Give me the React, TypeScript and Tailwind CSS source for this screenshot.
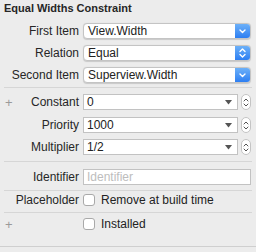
import React from "react";

const font = { fontFamily: '"Liberation Sans", Arial, sans-serif' };

const Chevron = ({ double }: { double?: boolean }) => (
  <svg width="9" height="12" viewBox="0 0 9 12" fill="none" stroke="white" strokeWidth="1.4" strokeLinecap="round" strokeLinejoin="round">
    {double ? (
      <>
        <path d="M2 4.5 L4.5 2 L7 4.5" />
        <path d="M2 7.5 L4.5 10 L7 7.5" />
      </>
    ) : (
      <path d="M2 5 L4.5 7.5 L7 5" />
    )}
  </svg>
);

const Popup = ({ value, double }: { value: string; double?: boolean }) => (
  <div className="flex h-[16px] items-stretch overflow-hidden rounded-[4px] border border-[#c4c4c4] bg-white shadow-[0_0.5px_1px_rgba(0,0,0,0.15)]">
    <div className="flex flex-1 items-center pl-[4px] text-[12px] leading-none text-[#222]">{value}</div>
    <div className="flex w-[15px] items-center justify-center bg-gradient-to-b from-[#6cb0f8] to-[#2c7ef2]">
      <Chevron double={double} />
    </div>
  </div>
);

const Stepper = () => (
  <div className="flex h-[16px] w-[10px] flex-col items-center justify-center rounded-[5px] border border-[#c4c4c4] bg-white">
    <svg width="6" height="11" viewBox="0 0 6 11" fill="none" stroke="#555" strokeWidth="1" strokeLinecap="round" strokeLinejoin="round">
      <path d="M1 4 L3 2 L5 4" />
      <path d="M1 7 L3 9 L5 7" />
    </svg>
  </div>
);

const Combo = ({ value }: { value: string }) => (
  <div className="flex items-center gap-[3px]">
    <div className="flex h-[16px] flex-1 items-center justify-between border border-[#c2c2c2] bg-white pl-[3px] pr-[5px]">
      <span className="text-[12px] leading-none text-[#222]">{value}</span>
      <svg width="7" height="5" viewBox="0 0 7 5">
        <path d="M0 0 H7 L3.5 4.5 Z" fill="#555" />
      </svg>
    </div>
    <Stepper />
  </div>
);

const Checkbox = () => (
  <div className="h-[12px] w-[12px] rounded-[3px] border border-[#a9a9a9] bg-white" />
);

const Row = ({
  label,
  plus,
  children,
  className = "",
}: {
  label?: string;
  plus?: boolean;
  children: React.ReactNode;
  className?: string;
}) => (
  <div className={"relative flex items-center " + className}>
    {plus && <span className="absolute left-[5px] text-[13px] font-light leading-none text-[#9a9a9a]">+</span>}
    <div className="w-[79px] shrink-0 text-right text-[12px] leading-none text-[#262626]">{label}</div>
    <div className="ml-[4px] mr-[5px] flex-1">{children}</div>
  </div>
);

const Sep = ({ className = "" }: { className?: string }) => (
  <div className={"mx-[4px] h-px bg-[#d6d6d6] " + className} />
);

export default function App() {
  return (
    <div className="h-[252px] w-[256px] overflow-hidden bg-[#ececec]" style={font}>
      <div className="h-[15px] px-[4px] pt-[2px] text-[11px] font-bold leading-[13px] text-[#262626]">
        Equal Widths Constraint
      </div>

      <Row label="First Item" className="mt-[8px] h-[16px]">
        <Popup value="View.Width" />
      </Row>
      <Row label="Relation" className="mt-[6px] h-[16px]">
        <Popup value="Equal" double />
      </Row>
      <Row label="Second Item" className="mt-[6px] h-[16px]">
        <Popup value="Superview.Width" />
      </Row>

      <Sep className="mt-[4px]" />

      <Row label="Constant" plus className="mt-[6px] h-[16px]">
        <Combo value="0" />
      </Row>
      <Row label="Priority" className="mt-[7px] h-[16px]">
        <Combo value="1000" />
      </Row>
      <Row label="Multiplier" className="mt-[6px] h-[16px]">
        <Combo value="1/2" />
      </Row>

      <Sep className="mt-[6px]" />

      <Row label="Identifier" className="mt-[7px] h-[16px]">
        <div className="flex h-[16px] items-center border border-[#c2c2c2] bg-white pl-[3px] text-[12px] leading-none text-[#bdbdbd]">
          Identifier
        </div>
      </Row>

      <Sep className="mt-[5px]" />

      <Row label="Placeholder" className="mt-[3px] h-[12px]">
        <div className="flex items-center gap-[6px]">
          <Checkbox />
          <span className="text-[12px] leading-none text-[#222]">Remove at build time</span>
        </div>
      </Row>

      <Sep className="mt-[6px]" />

      <Row plus className="mt-[5px] h-[12px]">
        <div className="flex items-center gap-[6px]">
          <Checkbox />
          <span className="text-[12px] leading-none text-[#222]">Installed</span>
        </div>
      </Row>

      <div className="mt-[16px] h-px bg-[#cfcfcf]" />
    </div>
  );
}
